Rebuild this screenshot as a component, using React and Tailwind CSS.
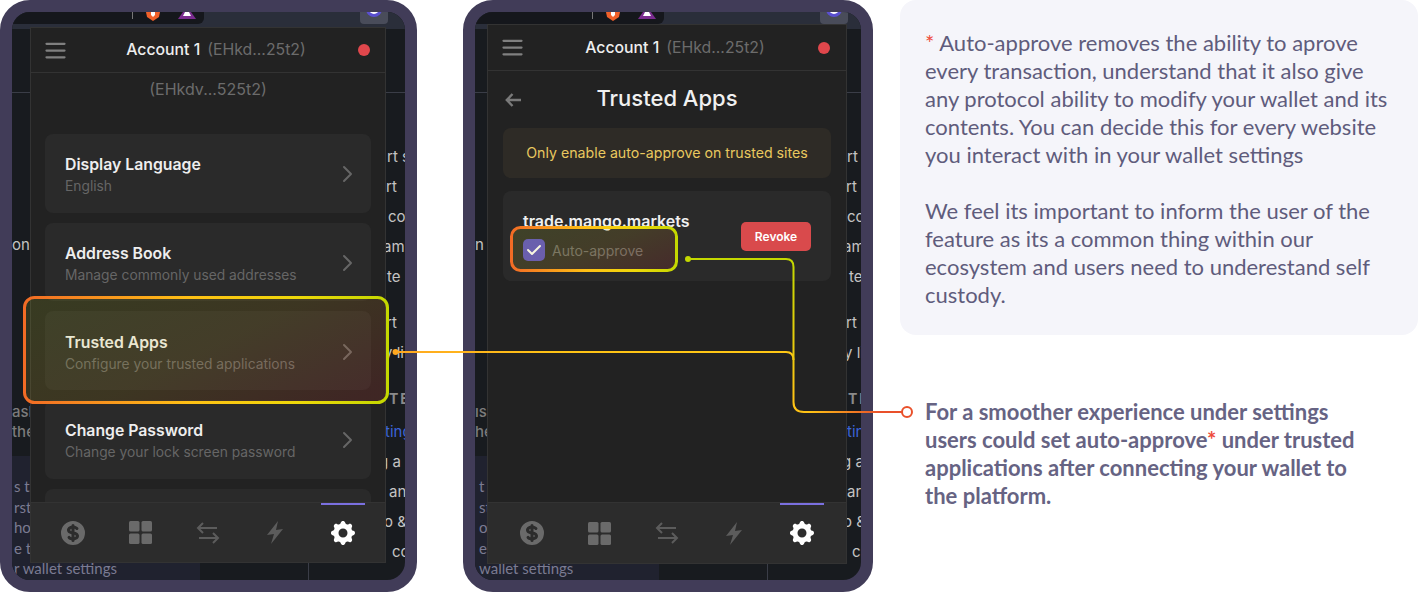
import { HiCurrencyDollar, HiCog, HiOutlineMenu, HiOutlineChevronRight, HiCheck } from 'react-icons/hi';

const settingsItems = [
  { title: 'Display Language', sub: 'English' },
  { title: 'Address Book', sub: 'Manage commonly used addresses' },
  { title: 'Trusted Apps', sub: 'Configure your trusted applications' },
  { title: 'Change Password', sub: 'Change your lock screen password' },
];

const rightRowsOne = [
  ['rt s', 'pl-[78px]'],
  ['ort', 'pl-[68px]'],
  ['co', 'pl-[79px]'],
  ['am', 'pl-[74px]'],
  ['te', 'pl-[78px]'],
  ['ort', 'pl-[68px]'],
  ['y li', 'pl-[75px]'],
  ['TE', 'pl-[80px]'],
  ['ting', 'pl-[76px]'],
  ['g a', 'pl-[70px]'],
  ['an', 'pl-[80px]'],
  ['o &', 'pl-[75px]'],
  ['co', 'pl-[83px]'],
];

const rightRowsTwo = [
  ['rt s', 'pl-[79px]'],
  ['ort', 'pl-[69px]'],
  ['cc', 'pl-[79px]'],
  ['am', 'pl-[75px]'],
  ['te', 'pl-[81px]'],
  ['ort', 'pl-[69px]'],
  ['y li', 'pl-[76px]'],
  ['TE', 'pl-[80px]'],
  ['tin', 'pl-[79px]'],
  ['g a', 'pl-[74px]'],
  ['ar', 'pl-[79px]'],
  ['o &', 'pl-[75px]'],
  ['c', 'pl-[84px]'],
];

const TopBar = ({ darkWidth, buttonRight, showRed }) => (
  <div className="relative flex h-[17px] shrink-0 justify-between overflow-hidden bg-[#2a2e3a]">
    <div className={`flex h-[12px] items-start justify-end overflow-hidden rounded-br-md bg-[#15171c] pr-[8px] ${darkWidth}`}>
      <div className="mr-[12px] h-[7px] w-px bg-[#777]" />
      <svg width="16" height="9" viewBox="0 0 16 9" className="mr-[17px]">
        <path d="M1 0h14l-1 5-6 4-6-4z" fill="#f0602a" />
        <path d="M6 0h4v3l-2 2-2-2z" fill="#fff" />
      </svg>
      <svg width="18" height="7" viewBox="0 0 18 7">
        <path d="M5 0h8l5 7H0z" fill="#7a2c8f" />
        <path d="M7 0h4l2 4H5z" fill="#fff" />
      </svg>
    </div>
    <div className={`flex items-start gap-[10px] ${buttonRight}`}>
      <div className="flex h-[12px] w-[28px] justify-center overflow-hidden rounded-b-sm bg-[#494c5a]">
        <div className="-mt-[11px] h-[16px] w-[16px] rounded-full border-[3px] border-[#5a4fd0] bg-white" />
      </div>
      {showRed && <div className="-mt-[3px] h-[10px] w-[7px] rounded-bl-full bg-[#c8402e]" />}
    </div>
  </div>
);

const Backdrop = ({ leftWidth, rightRows, leftTop, leftMid, panelRows, panelPad, panelWidth }) => {
  const renderRow = ([text, pad]) => (
    <div key={text + pad} className={`h-[30px] ${pad}`}>{text}</div>
  );
  return (
    <div className="flex min-h-0 flex-1 font-['Inter',sans-serif]">
      <div className={`flex shrink-0 flex-col overflow-hidden border-r border-[#3a3d47] ${leftWidth}`}>
        <div className="h-[64px] shrink-0 border-b border-[#3a3d47]" />
        <div className="mt-[137px] h-[30px] text-[15px] leading-[30px] text-[#c4c4c4]">{leftTop}</div>
        <div className="mt-[142px] text-[15px] font-medium leading-[20px] text-[#7c7c7c]">
          {leftMid.map((t) => (
            <div key={t}>{t}</div>
          ))}
        </div>
        <div className={`mt-[14px] flex-1 whitespace-nowrap bg-[#20222f] pt-[20px] font-['Lato',sans-serif] text-[15px] leading-[20.5px] text-[#7b7b92] ${panelWidth} ${panelPad}`}>
          {panelRows.map((t) => (
            <div key={t}>{t}</div>
          ))}
        </div>
      </div>
      <div className="min-w-0 flex-1 overflow-hidden whitespace-nowrap text-[15px] leading-[30px] text-[#c4c4c4]">
        <div className="h-[64px] shrink-0 border-b border-[#3a3d47]" />
        <div className="mt-[49px]">{rightRows.slice(0, 5).map(renderRow)}</div>
        <div className="mt-[16px]">{rightRows.slice(5, 7).map(renderRow)}</div>
        <div className={`mt-[16px] h-[30px] text-[14px] font-bold tracking-[2px] text-[#8a8a8a] ${rightRows[7][1]}`}>{rightRows[7][0]}</div>
        <div className={`mt-[3px] h-[30px] text-[#3c64d8] ${rightRows[8][1]}`}>{rightRows[8][0]}</div>
        {rightRows.slice(9).map(renderRow)}
      </div>
    </div>
  );
};

const Footer = ({ height, pad }) => (
  <div className={`relative flex shrink-0 items-center border-t border-[#333] bg-[#2c2c2c] text-[#6a6a6a] ${height} ${pad}`}>
    <div className="flex h-full w-[67.5px] items-center justify-center">
      <HiCurrencyDollar size={30} />
    </div>
    <div className="flex h-full w-[67.5px] items-center justify-center">
      <svg width="23" height="23" viewBox="0 0 23 23" fill="currentColor">
        <rect x="0" y="0" width="10.5" height="10.5" rx="1.5" />
        <rect x="12.5" y="0" width="10.5" height="10.5" rx="1.5" />
        <rect x="0" y="12.5" width="10.5" height="10.5" rx="1.5" />
        <rect x="12.5" y="12.5" width="10.5" height="10.5" rx="1.5" />
      </svg>
    </div>
    <div className="flex h-full w-[67.5px] items-center justify-center">
      <svg width="24" height="24" viewBox="0 0 24 24" fill="none" stroke="#5c5c5c" strokeWidth="2">
        <path d="M21 7H2M7 2L2 7l5 5" />
        <path d="M3 17h19M17 12l5 5-5 5" />
      </svg>
    </div>
    <div className="flex h-full w-[67.5px] items-center justify-center">
      <svg width="16" height="23" viewBox="0 0 16 23" fill="#5c5c5c">
        <path d="M11 0L0 14l7-1-3 10L16 8l-7 1z" />
      </svg>
    </div>
    <div className="relative flex h-full w-[67.5px] items-center justify-center text-white">
      <div className="absolute left-[12px] top-0 h-[2px] w-[44px] bg-[#7b70e0]" />
      <HiCog size={30} />
    </div>
  </div>
);

const Header = ({ height, accountClass, pad }) => (
  <div className={`flex shrink-0 items-center justify-between border-b border-[#333] ${height} ${pad}`}>
    <HiOutlineMenu size={27} className="text-[#808080]" />
    <div className={`flex items-center gap-[7px] text-[15.8px] leading-none ${accountClass}`}>
      <span className="font-medium text-[#eeeeee]">Account 1</span>
      <span className="text-[#6c6c6c]">(EHkd...25t2)</span>
    </div>
    <div className="h-[12px] w-[12px] rounded-full bg-[#e0474c]" />
  </div>
);

const SettingsBody = () => (
  <div className="min-h-0 flex-1 overflow-hidden px-[14px]">
    <div className="h-[61px] pt-[6px] text-center text-[16px] leading-[20px] text-[#6c6c6c]">(EHkdv...525t2)</div>
    <div className="flex flex-col gap-[10px]">
      {settingsItems.map((item) => (
        <div key={item.title} className="flex h-[78.67px] shrink-0 items-center justify-between rounded-lg bg-[#2a2a2a] pl-[20px] pr-[12px]">
          <div className="pt-[5px]">
            <div className="text-[15.8px] font-semibold leading-[20px] text-[#eeeeee]">{item.title}</div>
            <div className="mt-[1px] text-[13.8px] leading-[20px] text-[#666]">{item.sub}</div>
          </div>
          <HiOutlineChevronRight size={24} className="mt-[2px] text-[#666]" />
        </div>
      ))}
      <div className="h-[78px] shrink-0 rounded-lg bg-[#2a2a2a]" />
    </div>
  </div>
);

const TrustedBody = () => (
  <div className="min-h-0 flex-1 overflow-hidden px-[15px]">
    <div className="flex h-[57px] items-center pb-[3px]">
      <svg width="16" height="16" viewBox="0 0 16 16" fill="none" stroke="#7a7a7a" strokeWidth="2.4" className="ml-[2px] mt-[3px] shrink-0">
        <path d="M7.5 2L1.8 8l5.7 6M2 8h14" />
      </svg>
      <div className="flex-1 pr-[18px] text-center text-[22px] font-medium leading-none text-[#f0f0f0]">Trusted Apps</div>
    </div>
    <div className="flex h-[50px] items-center justify-center rounded-lg bg-[#2e2b26] text-[14.2px] text-[#e9c85f]">
      Only enable auto-approve on trusted sites
    </div>
    <div className="mt-[13px] flex h-[90px] items-center justify-between rounded-lg bg-[#2a2a2a] pl-[20px] pr-[20px]">
      <div>
        <div className="text-[16px] font-semibold leading-[20px] text-[#f0f0f0]">trade.mango.markets</div>
        <div className="mt-[8px] flex items-center gap-[7px]">
          <div className="flex h-[22px] w-[22px] items-center justify-center rounded-[5px] bg-[#5a4fc4] text-white">
            <HiCheck size={20} />
          </div>
          <span className="text-[14px] text-[#6c6c6c]">Auto-approve</span>
        </div>
      </div>
      <div className="mt-[1px] flex h-[29px] w-[70px] items-center justify-center rounded-[5px] bg-[#d94a4c] text-[12px] font-semibold text-white">
        Revoke
      </div>
    </div>
  </div>
);

const Annotations = () => (
  <svg className="pointer-events-none absolute left-0 top-0" width="1418" height="592" viewBox="0 0 1418 592" fill="none">
    <defs>
      <linearGradient id="stroke1" gradientUnits="userSpaceOnUse" x1="24" y1="350" x2="388" y2="350">
        <stop offset="0" stopColor="#f26b25" />
        <stop offset="0.45" stopColor="#ffc015" />
        <stop offset="0.75" stopColor="#eed80a" />
        <stop offset="1" stopColor="#c4d800" />
      </linearGradient>
      <linearGradient id="stroke2" gradientUnits="userSpaceOnUse" x1="511" y1="250" x2="677" y2="250">
        <stop offset="0" stopColor="#f26b25" />
        <stop offset="0.45" stopColor="#ffc015" />
        <stop offset="0.75" stopColor="#eed80a" />
        <stop offset="1" stopColor="#c4d800" />
      </linearGradient>
      <linearGradient id="fill1" x1="0" y1="0.2" x2="1" y2="0.8">
        <stop offset="0" stopColor="#c0d020" stopOpacity="0.14" />
        <stop offset="0.5" stopColor="#e0b020" stopOpacity="0.14" />
        <stop offset="1" stopColor="#f04030" stopOpacity="0.14" />
      </linearGradient>
      <linearGradient id="lineA" gradientUnits="userSpaceOnUse" x1="395" y1="352" x2="790" y2="352">
        <stop offset="0" stopColor="#ffa820" />
        <stop offset="0.4" stopColor="#ffc315" />
        <stop offset="1" stopColor="#ffc815" />
      </linearGradient>
      <linearGradient id="lineB" gradientUnits="userSpaceOnUse" x1="793" y1="262" x2="793" y2="400">
        <stop offset="0" stopColor="#c4d800" />
        <stop offset="1" stopColor="#ffc315" />
      </linearGradient>
      <linearGradient id="lineC" gradientUnits="userSpaceOnUse" x1="810" y1="412" x2="880" y2="412">
        <stop offset="0" stopColor="#ffc315" />
        <stop offset="1" stopColor="#e9502a" />
      </linearGradient>
    </defs>
    <rect x="24.5" y="297.5" width="363" height="105" rx="10" fill="url(#fill1)" stroke="url(#stroke1)" strokeWidth="3" />
    <rect x="511.5" y="227.5" width="165" height="43" rx="9" fill="url(#fill1)" stroke="url(#stroke2)" strokeWidth="3" />
    <circle cx="395.5" cy="352" r="3" fill="#ffa820" />
    <path d="M395 352H786Q793.5 352 793.5 360" stroke="url(#lineA)" strokeWidth="2" />
    <circle cx="688" cy="259" r="3" fill="#c4d800" />
    <path d="M688 259H786Q793.5 259 793.5 267V400" stroke="url(#lineB)" strokeWidth="2" />
    <path d="M793.5 400V402Q793.5 412 804 412H902" stroke="url(#lineC)" strokeWidth="2" />
    <circle cx="907" cy="412" r="5" fill="#ffffff" stroke="#e9502a" strokeWidth="2" />
  </svg>
);

export default function App() {
  return (
    <div className="relative flex h-[592px] w-[1418px] overflow-hidden bg-white">
      <div className="relative h-[592px] w-[417px] shrink-0 overflow-hidden rounded-[30px] border-[12px] border-[#413c58] bg-[#181b1f]">
        <div className="flex h-full flex-col">
          <TopBar darkWidth="w-[192px]" buttonRight="pr-0" showRed />
          <Backdrop
            leftWidth="w-[297px]"
            leftTop="on"
            leftMid={['asl', 'the']}
            panelWidth="w-[188px]"
            panelPad="pl-[2px]"
            panelRows={['s th', 'rst', 'hoo', 'e t', 'r wallet settings']}
            rightRows={rightRowsOne}
          />
        </div>
        <div className="absolute left-[18px] top-[15px] flex h-[536px] w-[356px] flex-col overflow-hidden border border-[#333] bg-[#222222] font-['Inter',sans-serif]">
          <Header height="h-[45px]" accountClass="ml-[5px]" pad="pl-[11px] pr-[15px]" />
          <SettingsBody />
          <Footer height="h-[60px]" pad="pl-[8px]" />
        </div>
      </div>

      <div className="relative ml-[46px] h-[592px] w-[410px] shrink-0 overflow-hidden rounded-[30px] border-[12px] border-[#413c58] bg-[#181b1f]">
        <div className="flex h-full flex-col">
          <TopBar darkWidth="w-[189px]" buttonRight="pr-[13px]" />
          <Backdrop
            leftWidth="w-[293px]"
            leftTop="n"
            leftMid={['ısı', 'he']}
            panelWidth="w-[184px]"
            panelPad="pl-[4px]"
            panelRows={['t', 'st', 'ood', 'e t', 'wallet settings']}
            rightRows={rightRowsTwo}
          />
        </div>
        <div className="absolute left-[12px] top-[12px] flex h-[540px] w-[360px] flex-col overflow-hidden border border-[#333] bg-[#222222] font-['Inter',sans-serif]">
          <Header height="h-[46px]" accountClass="ml-[6px]" pad="pl-[11px] pr-[16px]" />
          <TrustedBody />
          <Footer height="h-[61px]" pad="pl-[10px]" />
        </div>
      </div>

      <div className="ml-[27px] flex w-[518px] shrink-0 flex-col font-['Lato',sans-serif] [font-feature-settings:'liga'_1]">
        <div className="h-[335px] rounded-2xl bg-[#f5f5fa] px-[25px] pt-[29px] text-[22px] leading-[28px] text-[#5f5c7c]">
          <p>
            <span className="text-[#ee4b3b]">*</span> Auto-approve removes the ability to aprove
            <br />
            every transaction, understand that it also give
            <br />
            any protocol ability to modify your wallet and its
            <br />
            contents. You can decide this for every website
            <br />
            you interact with in your wallet settings
          </p>
          <p className="mt-[28px]">
            We feel its important to inform the user of the
            <br />
            feature as its a common thing within our
            <br />
            ecosystem and users need to underestand self
            <br />
            custody.
          </p>
        </div>
        <p className="ml-[25px] mt-[63px] text-[22px] font-bold leading-[28px] text-[#666383]">
          For a smoother experience under settings
          <br />
          users could set auto-approve<span className="text-[#ee4b3b]">*</span> under trusted
          <br />
          applications after connecting your wallet to
          <br />
          the platform.
        </p>
      </div>

      <Annotations />
    </div>
  );
}
